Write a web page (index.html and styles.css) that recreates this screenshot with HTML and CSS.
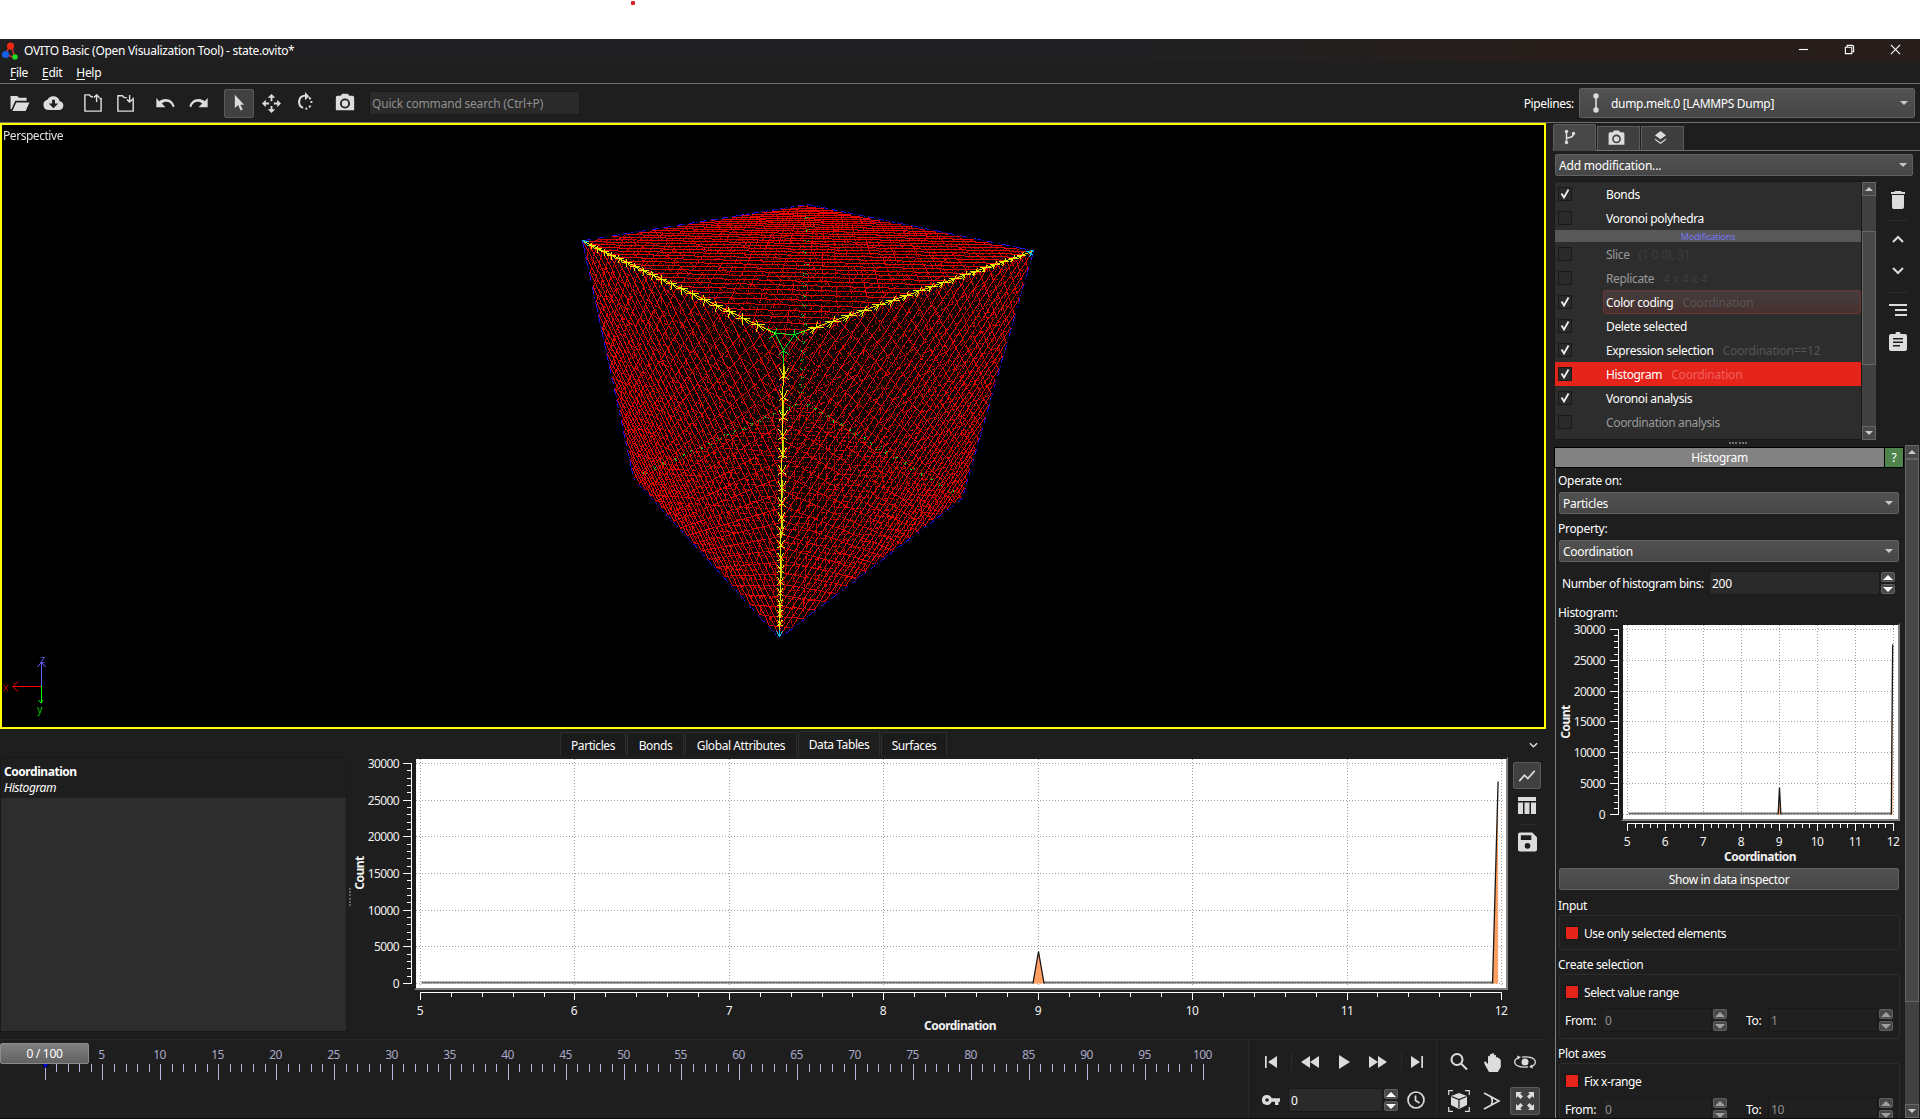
FILE: index.html
```html
<!DOCTYPE html>
<html lang="en">
<head>
<meta charset="utf-8">
<title>OVITO Basic (Open Visualization Tool) - state.ovito*</title>
<link rel="stylesheet" href="styles.css">
</head>
<body>
<svg class="defs" width="0" height="0">
  <symbol id="tri-down" viewBox="0 0 8 4"><path d="M0 0h8L4 4z"/></symbol>
  <symbol id="tri-up" viewBox="0 0 8 4"><path d="M0 4h8L4 0z"/></symbol>
  <symbol id="camera" viewBox="0 0 24 24"><path fill-rule="evenodd" d="M9 2 7.2 4H4a2 2 0 0 0-2 2v14h20V6a2 2 0 0 0-2-2h-3.200L15 2zM12 7a5.500 5.500 0 1 1 0 11 5.500 5.500 0 0 1 0-11zm0 2a3.500 3.500 0 1 0 0 7 3.500 3.500 0 0 0 0-7z"/></symbol>
</svg>
<div class="desktop-strip"><i class="red-dot"></i></div>
<div class="window">
  <header class="titlebar">
    <svg class="logo" viewBox="0 0 16 18"><path d="M9 3 3 12l10 4z" fill="none" stroke="#c33" stroke-width="1.500"/><circle cx="8.500" cy="4" r="3.500" fill="#f32a12"/><circle cx="3.500" cy="12.500" r="3.500" fill="#1560e8"/><circle cx="13" cy="15" r="2.700" fill="#1be01b"/></svg>
    <span class="caption">OVITO Basic (Open Visualization Tool) - state.ovito*</span>
    <div class="winbtns">
      <svg viewBox="0 0 12 12"><path d="M1 6h10"/></svg>
      <svg viewBox="0 0 12 12"><path d="M1.500 3.500h7v7h-7zM3.500 3V1.500h5.500q1.500 0 1.500 1.500v5.500H9"/></svg>
      <svg viewBox="0 0 12 12"><path d="m1 1 10 10M11 1 1 11"/></svg>
    </div>
  </header>
  <nav class="menubar"><span><u>F</u>ile</span><span><u>E</u>dit</span><span><u>H</u>elp</span></nav>
  <div class="toolbar">
    <svg class="t-open" viewBox="0 0 22 18"><path d="M1 15V1h7l2 2h8v3H6L2 15zM3 17 7 8h14l-4 9z"/></svg>
    <svg class="t-cloud" viewBox="0 0 22 18"><path fill-rule="evenodd" d="M17.500 6.500A7 7 0 0 0 4.500 5 5.600 5.600 0 0 0 6 16h11a4.800 4.800 0 0 0 .5-9.500zM9.500 5h3v4H16l-5 5-5-5h3.500z"/></svg>
    <svg class="t-load line" viewBox="0 0 20 20"><path d="M10 3H8L6 1H1v18h18V5h-2M14 9V1m-3 3 3-3 3 3"/></svg>
    <svg class="t-save line" viewBox="0 0 20 20"><path d="M11 4H8L6 2H1v17h17V4M14 1v8m-3-3 3 3 3-3"/></svg>
    <svg class="t-undo" viewBox="0 0 22 12"><path d="M11 1C8 1 6 2 4.200 3.500L1 0v10h10L7 6c4-3.500 10-2 12 4l2-1C19.500 4 16 1 11 1z"/></svg>
    <svg class="t-redo" viewBox="0 0 22 12"><path d="M11 1c3 0 5 1 6.800 2.500L21 0v10H11l4-4C11 2.500 5 4 3 10L1 9C2.500 4 6 1 11 1z"/></svg>
    <div class="toolbtn active"><svg viewBox="0 0 12 20"><path d="M1 0v16l4-3.500L8 19l2.500-1.200L7.600 12H12z"/></svg></div>
    <svg class="t-move" viewBox="0 0 20 20"><path d="m10 0 4 4h-3v3.500H9V4H6zM10 20l4-4h-3v-3.500H9V16H6zM0 10l4-4v3h3.500v2H4v3zM20 10l-4-4v3h-3.500v2H16v3z"/></svg>
    <svg class="t-rotate" viewBox="0 0 20 22"><path d="M10 0v3A8 8 0 0 0 7.500 18.500l.8-2A6 6 0 0 1 10 5v4l4.500-4.500zM15 5l-1.300 1.500 1.600 2 1.900-1zM16 10l.2 2h2V10zM15.300 14.500l-1.500 1.600 1.400 1.500 2-2.100zM10.500 17.500v2l2.500-.5-.8-1.900z"/></svg>
    <svg class="t-camera"><use href="#camera"/></svg>
    <div class="search">Quick command search (Ctrl+P)</div>
    <label class="pipelines-label">Pipelines:</label>
    <div class="combo pipelines"><svg class="pipe" viewBox="0 0 6 20"><path d="M2.200 3h1.600v14H2.200z"/><circle cx="3" cy="3" r="2.700"/><circle cx="3" cy="17" r="2.700"/></svg><span>dump.melt.0 [LAMMPS Dump]</span><svg class="arrow"><use href="#tri-down"/></svg></div>
  </div>
  <div class="main">
    <div class="left">
      <section class="viewport">
        <span class="vp-title">Perspective</span>
        <canvas id="scene" width="1542" height="602"></canvas>
        <svg class="tripod" width="60" height="72"><path d="M39.500 31V7m-4 5 4-5 4 5" stroke="#6464ff"/><path d="M39 31.500H11m5-5-5 5 5 5" stroke="#f00"/><path d="M39.500 31v17m-3-3 2.500 3 2-3" stroke="#0f0"/><text x="38" y="8" fill="#5a5adc">z</text><text x="1" y="36" fill="#c80000">x</text><text x="35" y="58" fill="#00c800">y</text></svg>
      </section>
      <div class="inspector-tabs">
        <span class="w1">Particles</span><span class="w2">Bonds</span><span class="w3">Global Attributes</span><span class="w4 sel">Data Tables</span><span class="w5">Surfaces</span>
        <svg class="collapse" viewBox="0 0 10 6"><path d="m1 1 4 4 4-4"/></svg>
      </div>
      <div class="inspector">
        <div class="tables"><div class="table-item"><b>Coordination</b><i>Histogram</i></div></div>
        <div class="grip"></div>
        <svg id="plot-big" class="plot" width="1155" height="280"></svg>
        <div class="plot-tools">
          <div class="toolbtn active"><svg viewBox="0 0 20 14"><path d="m1 13 6-7 4 4 8-9" fill="none" stroke="#dcdcdc" stroke-width="2"/></svg></div>
          <svg class="p-table" viewBox="0 0 18 18"><path d="M0 1h18v4H0zM0 6.500h5V18H0zM6.500 6.500h5V18h-5zM13 6.500h5V18h-5z"/></svg>
          <hr>
          <svg class="p-save" viewBox="0 0 20 20"><path fill-rule="evenodd" d="M2 0h13l5 5v13a2 2 0 0 1-2 2H2a2 2 0 0 1-2-2V2a2 2 0 0 1 2-2zm1 3v5h11V3zm7 8a3 3 0 1 0 0 6 3 3 0 0 0 0-6z"/></svg>
        </div>
      </div>
      <div class="timebar">
        <div class="timeline"><svg id="ticks" width="1249" height="78"></svg><div class="frame-slider">0 / 100</div></div>
        <div class="playback">
          <div class="row">
            <svg viewBox="0 0 12 12"><path d="M0 0h1.700v12H0zM12 0v12L3 6z"/></svg><hr>
            <svg class="wide" viewBox="0 0 18 12"><path d="M9 0v12L0 6zM18 0v12L9 6z"/></svg>
            <svg class="play" viewBox="0 0 11 14"><path d="M0 0v14l11-7z"/></svg>
            <svg class="wide" viewBox="0 0 18 12"><path d="M0 0v12l9-6zM9 0v12l9-6z"/></svg><hr>
            <svg viewBox="0 0 12 12"><path d="M0 0v12l9-6zM10.300 0H12v12h-1.700z"/></svg>
          </div>
          <div class="row second">
            <svg class="key" viewBox="0 0 18 10"><path fill-rule="evenodd" d="M5 0a5 5 0 0 1 4.600 3.300H18v3.400h-1.500V10H13V6.700H9.600A5 5 0 1 1 5 0zm0 3.200a1.800 1.800 0 1 0 0 3.600 1.800 1.800 0 0 0 0-3.600z"/></svg>
            <div class="field frame">0</div>
            <div class="spin"><b><svg><use href="#tri-up"/></svg></b><b><svg><use href="#tri-down"/></svg></b></div>
            <svg class="clock" viewBox="0 0 18 18"><path d="M9 1a8 8 0 1 1 0 16A8 8 0 0 1 9 1zM8.500 4.500V9.500l4 2.500" fill="none" stroke="#dcdcdc" stroke-width="1.700"/></svg>
          </div>
        </div>
        <div class="navtools">
          <svg class="n1" viewBox="0 0 18 18"><path d="M7 1a5.500 5.500 0 1 1 0 11A5.500 5.500 0 0 1 7 1zm4.200 9.700L17 16.500" fill="none" stroke="#dcdcdc" stroke-width="2"/></svg>
          <svg class="n2" viewBox="0 0 17 19"><path d="M5 19 1 12 0 9l1.200-.8L4 11V3.500q1-1.300 2 0V1.500q1-1.300 2 0v-.8q1.200-1.300 2 0v1.500q1.300-1 2 .3v2q1.500-1 2.300.5.6-.4 2.500 2V14l-3 5z"/></svg>
          <svg class="n3" viewBox="0 0 22 14"><path d="M6.500 11.800C-1 10-1 4.500 5 2.600M15.500 2.200c7.500 1.800 7.500 7.300 1.500 9.200M8 2.200q5-.8 9 .4M14 11.800q-5 .8-9-.4" fill="none" stroke="#dcdcdc" stroke-width="1.300"/><path d="m3 .5 4 1.500-3 2.500zM19 13.500 15 12l3-2.500z"/><circle cx="11" cy="7" r="3.500"/></svg>
          <svg class="n4" viewBox="0 0 22 22"><path d="M5 .7H.7V5M17 .7h4.300V5M5 21.300H.7V17M17 21.300h4.300V17" fill="none" stroke="#dcdcdc" stroke-width="1.200"/><path d="m11 3 8 3v9l-8 4-8-4V6z"/><path d="m3.500 6.500 7.500 3 7.500-3M11 9.500V18" fill="none" stroke="#1e1e1e" stroke-width="1.200"/></svg>
          <svg class="n5" viewBox="0 0 18 18"><path d="m1 1 15 8-15 8M8 5q2.500 4 0 8" fill="none" stroke="#dcdcdc" stroke-width="1.600"/></svg>
          <div class="toolbtn active n6"><svg viewBox="0 0 18 18"><path d="M0 0h6L4.200 1.800 7 4.600 4.600 7 1.800 4.200 0 6zM18 0v6l-1.800-1.800L13.400 7 11 4.600l2.800-2.800L12 0zM0 18v-6l1.800 1.800L4.600 11 7 13.400l-2.800 2.800L6 18zM18 18h-6l1.800-1.800-2.800-2.800 2.400-2.400 2.800 2.800L18 12z"/></svg></div>
        </div>
      </div>
    </div>
    <aside class="side">
      <div class="side-tabs">
        <span class="on"><svg viewBox="0 0 12 16"><path d="M2.500 3v10M9.500 4.500q0 4-6.500 4.500" fill="none" stroke="#dcdcdc" stroke-width="1.500"/><circle cx="2.500" cy="2.500" r="1.700"/><circle cx="2.500" cy="13.500" r="1.700"/><circle cx="9.500" cy="4.500" r="1.700"/></svg></span>
        <span><svg class="cam"><use href="#camera"/></svg></span>
        <span><svg class="lay" viewBox="0 0 14 14"><path d="m7 0 6 4.500L7 9 1 4.500zM1 8l6 4.500L13 8v1.500L7 14 1 9.500z"/></svg></span>
      </div>
      <div class="combo add"><span>Add modification...</span><svg class="arrow"><use href="#tri-down"/></svg></div>
      <div class="pipe-editor">
        <div class="pipe-list" id="pipe-list"></div>
        <div class="scroll s1"><b><svg><use href="#tri-up"/></svg></b><i></i><b><svg><use href="#tri-down"/></svg></b></div>
        <div class="pipe-tools">
          <svg class="q1" viewBox="0 0 14 18"><path d="M4 0h6l1 1h3v2H0V1h3zM1 4h12v12q0 2-2 2H3q-2 0-2-2z"/></svg><hr>
          <svg class="q2" viewBox="0 0 12 8"><path d="m1 7 5-5 5 5" fill="none" stroke="#dcdcdc" stroke-width="2"/></svg>
          <svg class="q3" viewBox="0 0 12 8"><path d="m1 1 5 5 5-5" fill="none" stroke="#dcdcdc" stroke-width="2"/></svg><hr>
          <svg class="q4" viewBox="0 0 18 12"><path d="M0 0h18v2H0zM6 5h12v2H6zM6 10h12v2H6z"/></svg>
          <svg class="q5" viewBox="0 0 18 19"><path fill-rule="evenodd" d="M6.500 2a2.500 2.500 0 0 1 5 0H16q2 0 2 2v13q0 2-2 2H2q-2 0-2-2V4q0-2 2-2zM4 6v1.600h10V6zm0 3.500v1.600h10V9.500zM4 13v1.600h7V13z"/></svg>
        </div>
      </div>
      <div class="grip flat"></div>
      <div class="props">
        <div class="rollout">
          <div class="roll-head"><span>Histogram</span><em>?</em></div>
          <div class="roll-body">
            <label class="l1">Operate on:</label>
            <div class="combo"><span>Particles</span><svg class="arrow"><use href="#tri-down"/></svg></div>
            <label class="l2">Property:</label>
            <div class="combo"><span>Coordination</span><svg class="arrow"><use href="#tri-down"/></svg></div>
            <div class="bins"><label>Number of histogram bins:</label><div class="field">200</div><div class="spin"><b><svg><use href="#tri-up"/></svg></b><b><svg><use href="#tri-down"/></svg></b></div></div>
            <label class="l3">Histogram:</label>
            <svg id="plot-small" class="plot" width="344" height="247"></svg>
            <div class="button">Show in data inspector</div>
            <label class="l4">Input</label>
            <div class="group one"><p><i></i>Use only selected elements</p></div>
            <label class="l5">Create selection</label>
            <div class="group two"><p><i></i>Select value range</p>
              <div class="range"><label>From:</label><div class="field">0</div><div class="spin dim"><b><svg><use href="#tri-up"/></svg></b><b><svg><use href="#tri-down"/></svg></b></div><label class="to">To:</label><div class="field">1</div><div class="spin dim"><b><svg><use href="#tri-up"/></svg></b><b><svg><use href="#tri-down"/></svg></b></div></div></div>
            <label class="l5">Plot axes</label>
            <div class="group two"><p><i></i>Fix x-range</p>
              <div class="range"><label>From:</label><div class="field">0</div><div class="spin dim"><b><svg><use href="#tri-up"/></svg></b><b><svg><use href="#tri-down"/></svg></b></div><label class="to">To:</label><div class="field">10</div><div class="spin dim"><b><svg><use href="#tri-up"/></svg></b><b><svg><use href="#tri-down"/></svg></b></div></div></div>
          </div>
        </div>
        <div class="scroll s2"><b><svg><use href="#tri-up"/></svg></b><i></i><b><svg><use href="#tri-down"/></svg></b></div>
      </div>
    </aside>
  </div>
</div>
<script src="script.js"></script>
</body>
</html>
```
FILE: styles.css
```css
* { box-sizing: border-box; }
body { margin: 0; width: 1920px; height: 1119px; overflow: hidden; background: #fff; color: #fff; font: 12px/16px "Noto Sans", "Open Sans", sans-serif; letter-spacing: -0.3px; }
svg { display: block; fill: #dcdcdc; flex: none; }
hr { border: 0; margin: 0; background: #2a2a2a; flex: none; }
.defs { position: absolute; }
.desktop-strip { height: 39px; padding: 1px 0 0 631px; }
.red-dot { display: block; width: 4px; height: 4px; border-radius: 1px; background: #e02020; }
.window { height: 1080px; background: #1e1e1e; display: flex; flex-direction: column; border-bottom: 1px solid #0c0c0c; }

.titlebar { height: 23px; display: flex; align-items: center; background: linear-gradient(90deg, #202022 0 60%, #271e1b 80%); }
.logo { width: 16px; height: 18px; margin-left: 2px; }
.caption { margin: 1px 0 0 6px; letter-spacing: -0.3px; }
.winbtns { margin-left: auto; display: flex; gap: 35px; padding: 0 19px 2px 0; }
.winbtns svg { width: 11px; height: 11px; fill: none; stroke: #fff; stroke-width: 1.2; }
.menubar { height: 22px; padding: 3px 0 0 10px; display: flex; gap: 14px; border-bottom: 1px solid #707070; letter-spacing: -0.3px; }
.menubar u { text-underline-offset: 2px; }

.toolbar { height: 39px; border-bottom: 1px solid #707070; display: flex; align-items: center; }
.toolbar .t-open { width: 22px; height: 17px; margin-left: 9px; }
.toolbar .t-cloud { width: 21px; height: 17px; margin-left: 12px; }
.toolbar .line { width: 18px; height: 18px; fill: none; stroke: #dcdcdc; stroke-width: 1.6; margin-left: 20px; }
.toolbar .t-save { margin-left: 15px; }
.toolbar .t-undo { width: 21px; height: 11px; margin-left: 20px; }
.toolbar .t-redo { width: 21px; height: 11px; margin-left: 12px; }
.toolbtn { display: flex; align-items: center; justify-content: center; border: 1px solid #5a5a5a; border-radius: 2px; background: #414141; flex: none; }
.toolbar .toolbtn { width: 30px; height: 29px; margin-left: 15px; }
.toolbar .toolbtn svg { width: 10px; height: 18px; }
.toolbar .t-move { width: 19px; height: 19px; margin-left: 8px; }
.toolbar .t-rotate { width: 18px; height: 20px; margin-left: 15px; margin-bottom: 2px; }
.toolbar .t-camera { width: 24px; height: 22px; margin-left: 19px; }
.search { width: 211px; height: 24px; margin-left: 12px; background: #2a2a2a; border: 1px solid #191919; border-radius: 2px; color: #8f8f8f; padding: 4px 2px; letter-spacing: -0.2px; }
.pipelines-label { margin-left: auto; padding-top: 1px; letter-spacing: -0.35px; }
.combo { display: flex; align-items: center; height: 22px; border: 1px solid #606060; border-radius: 2px; background: linear-gradient(#525252, #464646); padding: 0 5px 0 3px; flex: none; }
.combo span { padding-top: 1px; }
.combo .arrow { width: 8px; height: 4px; margin-left: auto; fill: #c8c8c8; }
.pipelines { width: 336px; height: 30px; margin: 0 5px 0 5px; padding: 0 6px 0 13px; }
.pipe { width: 6px; height: 20px; margin-right: 12px; }

.main { display: flex; flex: 1; min-height: 0; }
.left { width: 1546px; display: flex; flex-direction: column; }
.viewport { height: 606px; border: 2px solid #ff0; background: #000; position: relative; }
.viewport canvas { display: block; }
.vp-title { position: absolute; left: 1px; top: 3px; color: #e0e0e0; letter-spacing: -0.45px; }
.tripod { position: absolute; left: 0; top: 530px; fill: none; stroke-width: 1; }
.tripod text { stroke: none; font-size: 11px; }

.inspector-tabs { height: 28px; display: flex; align-items: flex-start; padding: 3px 0 0 560px; gap: 1px; letter-spacing: -0.42px; }
.inspector-tabs span { height: 23px; border: 1px solid #2e2e2e; border-bottom: 0; border-radius: 2px 2px 0 0; text-align: center; padding-top: 5px; background: #1b1b1b; }
.inspector-tabs .w1 { width: 66px; }
.inspector-tabs .w2 { width: 57px; }
.inspector-tabs .w3 { width: 112px; }
.inspector-tabs .w4 { width: 82px; margin-top: -1px; height: 26px; background: #1e1e1e; }
.inspector-tabs .w5 { width: 66px; }
.collapse { width: 9px; height: 6px; margin: 10px 8px 0 auto; fill: none; stroke: #dcdcdc; stroke-width: 1.6; }
.inspector { height: 282px; display: flex; }
.tables { width: 347px; height: 275px; background: #2d2d2d; border: 1px solid #191919; }
.table-item { height: 40px; background: #1e1e1e; padding: 6px 3px; display: flex; flex-direction: column; letter-spacing: -0.45px; }
.grip { width: 2px; height: 18px; margin: 131px 2px 0 2px; background: repeating-linear-gradient(#606060 0 2px, transparent 2px 3.2px); flex: none; }
.plot { overflow: visible; }
.plot text { fill: #f0f0f0; letter-spacing: -0.6px; }
.plot .bold { font-weight: bold; letter-spacing: -0.5px; }
.plot-tools { display: flex; flex-direction: column; align-items: center; width: 28px; margin: 5px 0 0 5px; }
.plot-tools .toolbtn { width: 28px; height: 27px; }
.plot-tools .toolbtn svg { width: 18px; height: 12px; }
.p-table { width: 18px; height: 18px; margin-top: 7px; }
.plot-tools hr { width: 18px; height: 1px; margin: 10px 0 7px; }
.p-save { width: 19px; height: 20px; }

.timebar { height: 79px; display: flex; border-top: 1px solid #292929; width: 1546px; }
.timeline { width: 1249px; height: 78px; position: relative; border-right: 1px solid #292929; }
.timeline text { fill: #a8a8c8; text-anchor: middle; letter-spacing: -0.6px; }
.frame-slider { position: absolute; left: 0; top: 3px; width: 89px; height: 21px; border: 1px solid #8c8c8c; border-radius: 2px; background: linear-gradient(#808080, #626262); text-align: center; line-height: 20px; }
.playback { width: 189px; height: 78px; border-right: 1px solid #292929; }
.playback .row { display: flex; align-items: center; height: 30px; padding: 0; margin-top: 7px; margin-left: 16px; }
.playback .row svg { width: 12px; height: 12px; }
.playback .row .wide { width: 18px; }
.playback .row .play { width: 11px; height: 14px; margin: 0 19px 0 20px; }
.playback .row hr { width: 1px; height: 18px; margin: 0 9px 0 14px; }
.playback .row hr + svg:last-child { margin-left: 0; }
.playback .second { margin-top: 8px; margin-left: 13px; }
.playback .row .key { width: 18px; height: 10px; }
.field { height: 24px; background: #2a2a2a; border: 1px solid #191919; border-radius: 2px; padding: 4px 2px 2px; flex: none; }
.frame { width: 95px; margin: 0 1px 0 8px; }
.spin { width: 14px; display: flex; flex-direction: column; gap: 2px; flex: none; }
.spin b { height: 10px; border: 1px solid #606060; border-radius: 2px; background: #484848; display: flex; align-items: center; justify-content: center; }
.spin svg, .playback .row .spin svg { width: 10px; height: 5px; fill: #fff; }
.spin.dim svg { fill: #a0a0a0; }
.playback .row .clock { width: 18px; height: 18px; margin-left: 9px; }
.navtools { display: grid; grid-template-columns: 43px 24px 42px; grid-template-rows: 42px 36px; align-items: center; justify-items: center; padding-top: 1px; }
.n1 { width: 18px; height: 18px; }
.n2 { width: 17px; height: 19px; }
.n3 { width: 22px; height: 14px; }
.n4 { width: 22px; height: 22px; }
.n5 { width: 18px; height: 18px; }
.n6 { width: 30px; height: 28px; }
.n6 svg { width: 18px; height: 18px; }

.side { width: 374px; display: flex; flex-direction: column; padding: 1px 0 0 7px; }
.side-tabs { height: 27px; display: flex; align-items: flex-end; gap: 1px; border-bottom: 1px solid #707070; flex: none; }
.side-tabs span { width: 43px; height: 24px; border: 1px solid #5c5c5c; border-bottom: 0; background: #3f3f3f; display: flex; align-items: center; justify-content: center; }
.side-tabs .on { height: 27px; margin-bottom: -1px; background: #484848; border-radius: 2px 2px 0 0; padding: 0 10px 2px 0; }
.side-tabs svg { width: 12px; height: 16px; }
.side-tabs .cam { width: 19px; height: 19px; margin-right: 5px; }
.side-tabs .lay { width: 13px; height: 13px; margin: 0 5px 2px 0; }
.add { width: 358px; margin: 3px 0 0 2px; letter-spacing: -0.2px; }
.pipe-editor { display: flex; height: 259px; margin: 5px 0 0 1px; flex: none; }
.pipe-list { width: 308px; height: 259px; background: #2d2d2d; border: 1px solid #191919; overflow: hidden; flex: none; letter-spacing: -0.35px; }
.item { height: 24px; display: flex; align-items: center; padding-left: 3px; }
.item .box { width: 14px; height: 14px; border: 1px solid #191919; background: #2a2a2a; margin: -1px 31px 0 0; flex: none; }
.item .box svg { width: 12px; height: 12px; fill: none; stroke: #f0f0f0; stroke-width: 1.8; }
.item .name { height: 24px; line-height: 24px; padding-left: 2px; border: 1px solid transparent; flex: 1; white-space: nowrap; }
.item .name small { font-size: 12px; color: #555; margin-left: 9px; letter-spacing: -0.2px; }
.item.off .name { color: #9a9a9a; }
.item.off .name small { color: #3e3e3e; }
.item.hot .name { background: linear-gradient(#443d3d, #48302f); border-color: #6b3532; border-radius: 2px; }
.item.sel { background: #e5241c; }
.item.sel .name small { color: #f0605a; }
.band { height: 12px; background: #585858; color: #7876f4; font-size: 9px; line-height: 13px; text-align: center; letter-spacing: -0.2px; }
.scroll { width: 14px; background: #414141; display: flex; flex-direction: column; justify-content: space-between; flex: none; }
.scroll b { height: 14px; border: 1px solid #666; background: #484848; display: flex; align-items: center; justify-content: center; }
.scroll i { border: 1px solid #666; background: #484848; }
.scroll svg { width: 8px; height: 4px; fill: #c8c8c8; }
.s1 { margin-top: 1px; }
.s1 i { height: 135px; margin-top: 35px; margin-bottom: 61px; }
.pipe-tools { width: 46px; display: flex; flex-direction: column; align-items: center; padding-top: 1px; }
.pipe-tools hr { width: 20px; height: 1px; }
.q1 { width: 14px; height: 18px; margin: 9px 0 11px; }
.q2 { width: 12px; height: 8px; margin: 14px 0 24px; }
.q3 { width: 12px; height: 8px; margin-bottom: 17px; }
.q4 { width: 18px; height: 12px; margin: 11px 0 16px; }
.q5 { width: 18px; height: 19px; }
.grip.flat { width: 18px; height: 2px; margin: 2px 0 2px 176px; background: repeating-linear-gradient(90deg, #707070 0 2px, transparent 2px 3.2px); }

.props { display: flex; flex: 1; min-height: 0; padding-left: 1px; gap: 1px; }
.rollout { width: 350px; overflow: hidden; padding-top: 1px; }
.roll-head { display: flex; height: 21px; width: 350px; background: #000; padding: 1px; gap: 1px; text-align: center; line-height: 20px; }
.roll-head span { flex: 1; background: #828282; }
.roll-head em { width: 18px; background: #4f834c; font-style: normal; }
.roll-body { border-left: 1px solid #808080; margin-left: 1px; padding-left: 2px; height: 1000px; display: flex; flex-direction: column; }
.roll-body > label { height: 16px; padding-top: 1px; flex: none; }
.roll-body > .combo { width: 340px; margin-left: 1px; }
.l1 { margin: 4px 0 4px; }
.l2 { margin: 6px 0 4px; }
.bins { display: flex; align-items: center; height: 24px; margin: 9px 0 9px 4px; flex: none; }
.bins label { width: 147px; letter-spacing: -0.42px; padding-top: 1px; }
.bins .field { width: 171px; margin-right: 1px; }
.l3 { margin-bottom: 1px; }
#plot-small { margin-left: -2px; }
.button { width: 340px; height: 22px; margin-left: 1px; border: 1px solid #606060; border-radius: 2px; background: linear-gradient(#525252, #464646); text-align: center; line-height: 21px; flex: none; letter-spacing: -0.35px; }
.l4 { margin: 7px 0 2px; }
.group { width: 341px; margin-left: 1px; border: 1px solid #2c2c2c; border-radius: 2px; flex: none; padding: 9px 5px; }
.group p { margin: 0; display: flex; align-items: center; height: 17px; letter-spacing: -0.43px; }
.group p i { width: 14px; height: 14px; background: #e5241c; border: 1px solid #161616; margin: -1px 5px 0 0; }
.one { height: 35px; }
.two { height: 65px; }
.l5 { margin: 6px 0 2px; }
.range { display: flex; align-items: center; height: 24px; margin: 7px 0 0 0; }
.range label { width: 37px; padding-top: 1px; }
.range .to { width: 22px; margin-left: 19px; }
.range .field { width: 110px; margin-right: 1px; color: #8f8f8f; background: #202020; padding-left: 2px; }
.s2 { height: 673px; margin-top: -1px; }
.s2 i { height: 543px; margin-bottom: 102px; }
```
FILE: script.js
```js
const NS = 'http://www.w3.org/2000/svg';
function add(parent, tag, attrs, text) {
  const e = document.createElementNS(NS, tag);
  for (const k in attrs) e.setAttribute(k, attrs[k]);
  if (text !== undefined) e.textContent = text;
  parent.appendChild(e);
  return e;
}

// Pipeline entries: name, parameter summary, checked, style
const items = [
  ['Bonds', '', 1, ''], ['Voronoi polyhedra', '', 0, ''], null,
  ['Slice', '(1 0 0), 31', 0, 'off'], ['Replicate', '4 x 4 x 4', 0, 'off'],
  ['Color coding', 'Coordination', 1, 'hot'], ['Delete selected', '', 1, ''],
  ['Expression selection', 'Coordination==12', 1, ''], ['Histogram', 'Coordination', 1, 'sel'],
  ['Voronoi analysis', '', 1, ''], ['Coordination analysis', '', 0, 'off'], ['', '', 0, 'off']
];
document.getElementById('pipe-list').innerHTML = items.map(i => i === null
  ? '<div class="band">Modifications</div>'
  : `<div class="item ${i[3]}"><span class="box">${i[2] ? '<svg viewBox="0 0 12 12"><path d="m2.500 5.500 2.500 4 4.500-8"/></svg>' : ''}</span><span class="name">${i[0]}${i[1] ? `<small>${i[1]}</small>` : ''}</span></div>`).join('');

// Histogram plot, all coordinates relative to the svg
function plot(id, o) {
  const s = document.getElementById(id);
  const X = v => Math.round(o.x5 + (v - 5) * o.dx) + 0.5;
  const Y = v => Math.round(o.y0 - v / 5000 * o.dy) + 0.5;
  add(s, 'path', { d: `M${o.l - 2} ${o.b + 2}H${o.r + 2}V${o.t - 2}L${o.r} ${o.t}V${o.b}H${o.l}z`, fill: '#808080' });
  add(s, 'rect', { x: o.l, y: o.t, width: o.r - o.l, height: o.b - o.t, fill: '#fff' });
  let grid = '', axis = '';
  for (let v = 0; v <= 30000; v += 5000) {
    grid += `M${o.l} ${Y(v)}H${o.r - 2}`;
    add(s, 'text', { x: o.lab, y: Y(v) + 4.5, 'text-anchor': 'end' }, v);
  }
  for (let v = 0; v <= 30000; v += 1000) axis += `M${o.ax} ${Y(v)}H${v % 5000 ? o.ax - 4 : o.ax - 8}`;
  axis += `M${o.ax + .5} ${Y(30000) - .5}V${Y(0) + .5}M${X(5) - .5} ${o.ay + .5}H${X(12) + .5}`;
  for (let v = 5; v <= 12; v++) {
    grid += `M${X(v)} ${o.t}V${o.b - 3}`;
    add(s, 'text', { x: X(v) - .5, y: o.ay + 22.5, 'text-anchor': 'middle' }, v);
  }
  for (let k = 0; k <= 7 * o.sub; k++) axis += `M${X(5 + k / o.sub)} ${o.ay}V${o.ay + (k % o.sub ? 5 : 8)}`;
  add(s, 'path', { d: grid, stroke: '#a0a0a0', 'stroke-dasharray': '1 2', fill: 'none' });
  add(s, 'path', { d: axis, stroke: '#fff', fill: 'none' });
  const c = X(9), w = o.dx * .036, p = Y(4400), h = Y(27500), b = Y(0), e = X(12) - o.dx * .022, f = e - w;
  add(s, 'path', { d: `M${c - w} ${b}L${c} ${p}L${c + w} ${b}zM${f} ${b}L${e} ${h}V${b}z`, fill: '#ffa062' });
  add(s, 'path', { d: `M${X(5) + 1} ${b - 1}H${c - w}M${c + w} ${b - 1}H${f}`, stroke: '#707070', 'stroke-width': 2, fill: 'none' });
  add(s, 'path', { d: `M${c - w} ${b}L${c} ${p}L${c + w} ${b}M${f} ${b}L${e} ${h}`, stroke: '#181818', 'stroke-width': 1.3, fill: 'none' });
  add(s, 'text', { x: o.tx, y: o.ay + 37.5, 'text-anchor': 'middle', class: 'bold' }, 'Coordination');
  add(s, 'text', { transform: `translate(${o.cx} ${o.cy}) rotate(-90)`, 'text-anchor': 'middle', class: 'bold' }, 'Count');
}
plot('plot-big', { l: 63, r: 1153, t: 2, b: 231, x5: 67, dx: 154.43, y0: 226, dy: 36.67, lab: 46, ax: 58, ay: 235, sub: 5, tx: 607, cx: 11, cy: 116 });
plot('plot-small', { l: 67, r: 342, t: 4, b: 198, x5: 71, dx: 38, y0: 193, dy: 30.85, lab: 49, ax: 62, ay: 202, sub: 5, tx: 204, cx: 14, cy: 101 });

// Animation frame ruler
const tl = document.getElementById('ticks');
let d = '';
for (let i = 0; i <= 100; i++) {
  const x = Math.floor(45 + i * 11.58) + .5;
  d += `M${x} 24V${i % 5 ? 32 : 40}`;
  if (i && i % 5 === 0) add(tl, 'text', { x: x - 1, y: 18.5 }, i);
}
add(tl, 'path', { d, stroke: '#b4b4dc' });
add(tl, 'path', { d: 'M42 24h7l-3.500 4z', fill: '#00f', stroke: '#000', 'stroke-width': .7 });

// Wireframe crystal: lattice lines of each cube face, mapped through its homography
const cv = document.getElementById('scene'), ctx = cv.getContext('2d');
const img = ctx.createImageData(cv.width, cv.height);
for (let i = 3; i < img.data.length; i += 4) img.data[i] = 255;
let seed = 7;
const rnd = () => (seed = (seed * 16807) % 2147483647) / 2147483647;
function px(x, y, c) {
  x = Math.round(x - 2); y = Math.round(y - 125);
  if (x < 0 || y < 0 || x >= cv.width || y >= cv.height) return;
  const i = (y * cv.width + x) * 4;
  img.data[i] = c[0]; img.data[i + 1] = c[1]; img.data[i + 2] = c[2];
}
function seg(a, b, c, keep) {
  const n = Math.max(1, Math.ceil(Math.max(Math.abs(a[0] - b[0]), Math.abs(a[1] - b[1]))));
  for (let i = 0; i <= n; i++) if (keep >= 1 || rnd() < keep) px(a[0] + (b[0] - a[0]) * i / n, a[1] + (b[1] - a[1]) * i / n, c);
}
function face(p0, p1, p2, p3) {
  const dx1 = p1[0] - p2[0], dx2 = p3[0] - p2[0], sx = p0[0] - p1[0] + p2[0] - p3[0];
  const dy1 = p1[1] - p2[1], dy2 = p3[1] - p2[1], sy = p0[1] - p1[1] + p2[1] - p3[1];
  const D = dx1 * dy2 - dx2 * dy1, g = (sx * dy2 - dx2 * sy) / D, h = (dx1 * sy - sx * dy1) / D;
  return (u, v) => {
    const w = g * u + h * v + 1;
    return [((p1[0] - p0[0] + g * p1[0]) * u + (p3[0] - p0[0] + h * p3[0]) * v + p0[0]) / w,
            ((p1[1] - p0[1] + g * p1[1]) * u + (p3[1] - p0[1] + h * p3[1]) * v + p0[1]) / w];
  };
}
const A = [583, 241], B = [807, 205], C = [1032, 251], Dp = [784, 336], E = [779, 636], F = [634, 477], G = [961, 497], H = [801, 401];
const N = 20, BR = [245, 0, 0], MD = [210, 0, 0], DK = [150, 0, 0];
function mesh(f, main, other, k1, k2) {
  for (let i = 0; i < N; i++) for (let j = 0; j < N; j++) {
    const u = i / N, v = j / N, q = 1 / N;
    seg(f(u, v), f(u + q, v + q), rnd() < .25 ? other : main, k1);
    seg(f(u + q, v), f(u, v + q), rnd() < .25 ? main : other, k2);
  }
}
function ladder(f, col, keep) {
  for (let i = 1; i < N; i++) for (let j = 0; j < N; j++) {
    seg(f(i / N, j / N), f(i / N, (j + .5) / N), col, keep);
    seg(f(j / N, i / N), f((j + .5) / N, i / N), col, keep);
  }
}
mesh(face(A, B, H, F), MD, DK, .5, .4);
mesh(face(B, C, G, H), DK, MD, .4, .5);
mesh(face(F, H, G, E), MD, DK, .5, .6);
const topFace = face(A, B, C, Dp), leftFace = face(A, Dp, E, F), rightFace = face(Dp, C, G, E);
ladder(leftFace, MD, .4); ladder(rightFace, MD, .4); ladder(topFace, DK, .4);
mesh(leftFace, BR, MD, 1, .85);
mesh(rightFace, MD, BR, .85, 1);
mesh(topFace, BR, MD, 1, .6);

const GR = [0, 225, 30], YL = [232, 232, 0], BL = [40, 10, 235], CY = [0, 190, 230];
const floorFace = face(F, H, G, E), backFace = face(A, B, H, F);
for (const [f, p, q] of [[backFace, [1, 0], [1, 1]], [floorFace, [0, 0], [1, 0]], [floorFace, [1, 0], [1, 1]]])
  for (let i = 1; i < 20; i++) {
    const c = f(p[0] + (q[0] - p[0]) * i / 20, p[1] + (q[1] - p[1]) * i / 20);
    for (let k = 0; k < 4; k++) px(c[0] + rnd() * 5 - 2.5, c[1] + rnd() * 3 - 1.5, k ? GR : [0, 160, 0]);
  }
// Silhouette edges as blue steps
for (const [f, a, b, o] of [[topFace, [0, 0], [1, 0], [0, -1]], [topFace, [1, 0], [1, 1], [0, -1]], [leftFace, [0, 0], [0, 1], [-1, 0]], [leftFace, [0, 1], [1, 1], [-1, 1]], [rightFace, [1, 0], [1, 1], [1, 0]], [rightFace, [1, 1], [0, 1], [1, 1]]])
  for (let i = 0; i < N; i++) {
    const at = t => { const p = f(a[0] + (b[0] - a[0]) * t, a[1] + (b[1] - a[1]) * t); return [p[0] + o[0], p[1] + o[1]]; };
    seg(at(i / N), at((i + .5) / N), BL, .85);
    seg(at((i + .5) / N), at((i + 1) / N), BL, .2);
  }
// Near edges with starred nodes
const T1 = [775, 333], T2 = [794, 334], T3 = [783, 350];
function edge(f, a, b, end, stop, dirs) {
  seg(end, stop, YL, 1);
  for (let i = 1; i < 19; i++) {
    const p = f(a[0] + (b[0] - a[0]) * (i + .3) / 20, a[1] + (b[1] - a[1]) * (i + .3) / 20);
    const t = (p[0] - end[0]) / (stop[0] - end[0]);
    if (Math.abs(stop[0] - end[0]) > 50) p[1] = end[1] + (stop[1] - end[1]) * t;
    const s = .55 + i / 19 * .55;
    for (const q of dirs) seg(p, [p[0] + q[0] * s, p[1] + q[1] * s], YL, 1);
  }
}
edge(topFace, [0, 0], [0, 1], A, T1, [[5, 5], [-6, 0], [6, 0], [-1, 6], [-1, -4]]);
edge(topFace, [1, 1], [0, 1], C, T2, [[-5, 5], [7, 0], [-7, 0], [-3, 6], [2, -4]]);
edge(leftFace, [1, 1], [1, 0], E, T3, [[-4, -7], [4, -7], [-4, 3], [4, 3]]);
for (let y = 366; y < 630; y++) if (y % 40 < 18) px(784 - (y - 350) / 72, y, [200, 200, 0]);
for (const [p, q] of [[T1, T2], [T2, T3], [T3, T1], [T3, [783, 363]], [T1, [767, 328]], [T2, [805, 330]], [T1, [769, 338]], [T2, [798, 339]], [T3, [779, 354]], [T3, [788, 354]], [T1, [776, 328]], [T2, [794, 329]]]) seg(p, q, GR, 1);
for (const [p, q] of [[[582, 240], [588, 241]], [[583, 241], [587, 245]], [[1026, 251], [1033, 250]], [[1032, 251], [1029, 256]], [[1028, 252], [1032, 254]], [[779, 636], [776, 631]], [[779, 636], [782, 631]], [[779, 636], [779, 630]]]) seg(p, q, CY, 1);
ctx.putImageData(img, 0, 0);
```
